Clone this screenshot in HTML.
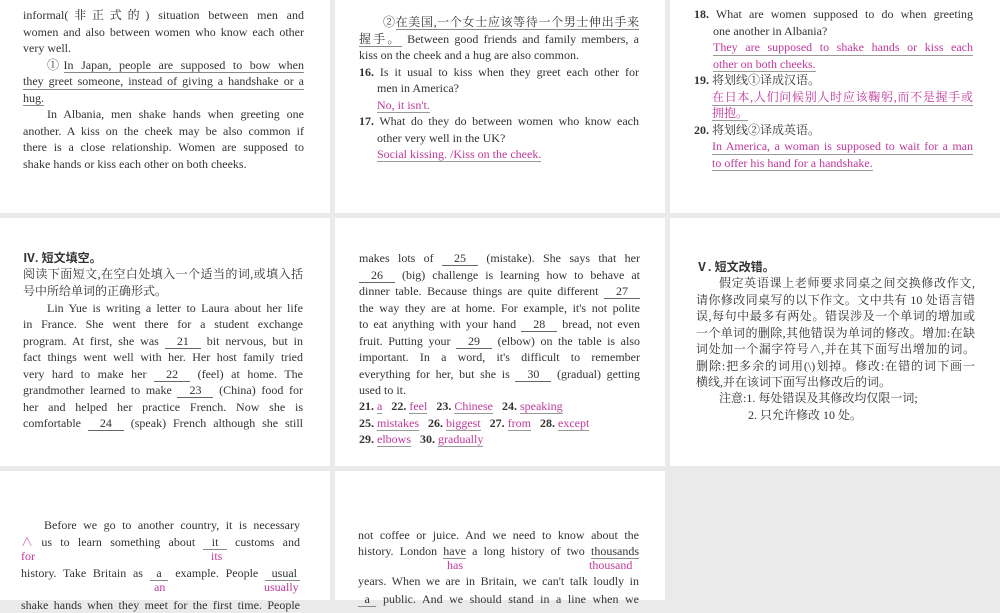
<!DOCTYPE html>
<html><head><meta charset="utf-8"><style>
html,body{margin:0;padding:0;}
body{width:1000px;height:600px;background:#eaeaea;position:relative;overflow:hidden;font-family:"Liberation Serif","Noto Serif CJK SC",serif;font-size:12px;color:#333;}
.c{position:absolute;background:#fff;}
.l{position:absolute;white-space:nowrap;line-height:16px;height:16px;}
.j{text-align:justify;text-align-last:justify;}
.p{color:#c0389c;}
.u{border-bottom:1px solid #888;}
.pu{color:#c0389c;border-bottom:1px solid #999;}
.bl{display:inline-block;width:36px;border-bottom:1px solid #666;text-align:center;text-align-last:center;line-height:13px;}
.h{font-family:"Liberation Sans","Noto Sans CJK SC",sans-serif;font-weight:bold;}
</style></head><body>
<div class="c" style="left:0;top:0;width:330px;height:213px"></div>
<div class="c" style="left:335px;top:0;width:330px;height:213px"></div>
<div class="c" style="left:670px;top:0;width:330px;height:213px"></div>
<div class="c" style="left:0;top:218px;width:330px;height:248px"></div>
<div class="c" style="left:335px;top:218px;width:330px;height:248px"></div>
<div class="c" style="left:670px;top:218px;width:330px;height:248px"></div>
<div class="c" style="left:0;top:471px;width:330px;height:129px"></div>
<div class="c" style="left:335px;top:471px;width:330px;height:129px"></div>

<!-- cell 1 -->
<div class="l j" style="left:23px;top:7px;width:281px">informal(非正式的) situation between men and</div>
<div class="l j" style="left:23px;top:24px;width:281px">women and also between women who know each other</div>
<div class="l" style="left:23px;top:40px">very well.</div>
<div class="l j" style="left:47px;top:57px;width:257px">①<span class="u">In Japan, people are supposed to bow when</span></div>
<div class="l j u" style="left:23px;top:73px;width:281px">they greet someone, instead of giving a handshake or a</div>
<div class="l" style="left:23px;top:90px"><span class="u">hug.</span></div>
<div class="l j" style="left:47px;top:106px;width:257px">In Albania, men shake hands when greeting one</div>
<div class="l j" style="left:23px;top:123px;width:281px">another. A kiss on the cheek may be also common if</div>
<div class="l j" style="left:23px;top:139px;width:281px">there is a close relationship. Women are supposed to</div>
<div class="l" style="left:23px;top:156px">shake hands or kiss each other on both cheeks.</div>

<!-- cell 2 -->
<div class="l j" style="left:383px;top:14px;width:256px">②<span class="u">在美国,一个女士应该等待一个男士伸出手来</span></div>
<div class="l j" style="left:359px;top:31px;width:280px"><span class="u">握手。</span> Between good friends and family members, a</div>
<div class="l" style="left:359px;top:47px">kiss on the cheek and a hug are also common.</div>
<div class="l j" style="left:359px;top:64px;width:280px"><b>16.</b> Is it usual to kiss when they greet each other for</div>
<div class="l" style="left:377px;top:80px">men in America?</div>
<div class="l" style="left:377px;top:97px"><span class="pu">No, it isn't.</span></div>
<div class="l j" style="left:359px;top:113px;width:280px"><b>17.</b> What do they do between women who know each</div>
<div class="l" style="left:377px;top:130px">other very well in the UK?</div>
<div class="l" style="left:377px;top:146px"><span class="pu">Social kissing. /Kiss on the cheek.</span></div>

<!-- cell 3 -->
<div class="l j" style="left:694px;top:6px;width:279px"><b>18.</b> What are women supposed to do when greeting</div>
<div class="l" style="left:713px;top:23px">one another in Albania?</div>
<div class="l j pu" style="left:713px;top:39px;width:260px">They are supposed to shake hands or kiss each</div>
<div class="l" style="left:713px;top:56px"><span class="pu">other on both cheeks.</span></div>
<div class="l" style="left:694px;top:72px"><b>19.</b> 将划线①译成汉语。</div>
<div class="l j pu" style="left:712px;top:89px;width:261px">在日本,人们问候别人时应该鞠躬,而不是握手或</div>
<div class="l" style="left:712px;top:105px"><span class="pu">拥抱。</span></div>
<div class="l" style="left:694px;top:122px"><b>20.</b> 将划线②译成英语。</div>
<div class="l j pu" style="left:712px;top:138px;width:261px">In America, a woman is supposed to wait for a man</div>
<div class="l" style="left:712px;top:155px"><span class="pu">to offer his hand for a handshake.</span></div>

<!-- cell 4 -->
<div class="l h" style="left:23px;top:250px">Ⅳ. 短文填空。</div>
<div class="l j" style="left:23px;top:266px;width:280px">阅读下面短文,在空白处填入一个适当的词,或填入括</div>
<div class="l" style="left:23px;top:283px">号中所给单词的正确形式。</div>
<div class="l j" style="left:47px;top:300px;width:256px">Lin Yue is writing a letter to Laura about her life</div>
<div class="l j" style="left:23px;top:316px;width:280px">in France. She went there for a student exchange</div>
<div class="l j" style="left:23px;top:333px;width:280px">program. At first, she was <span class="bl">21</span> bit nervous, but in</div>
<div class="l j" style="left:23px;top:349px;width:280px">fact things went well with her. Her host family tried</div>
<div class="l j" style="left:23px;top:366px;width:280px">very hard to make her <span class="bl">22</span> (feel) at home. The</div>
<div class="l j" style="left:23px;top:382px;width:280px">grandmother learned to make <span class="bl">23</span> (China) food for</div>
<div class="l j" style="left:23px;top:399px;width:280px">her and helped her practice French. Now she is</div>
<div class="l j" style="left:23px;top:415px;width:280px">comfortable <span class="bl">24</span> (speak) French although she still</div>

<!-- cell 5 -->
<div class="l j" style="left:359px;top:250px;width:281px">makes lots of <span class="bl">25</span> (mistake). She says that her</div>
<div class="l j" style="left:359px;top:267px;width:281px"><span class="bl">26</span> (big) challenge is learning how to behave at</div>
<div class="l j" style="left:359px;top:283px;width:281px">dinner table. Because things are quite different <span class="bl">27</span></div>
<div class="l j" style="left:359px;top:300px;width:281px">the way they are at home. For example, it's not polite</div>
<div class="l j" style="left:359px;top:316px;width:281px">to eat anything with your hand <span class="bl">28</span> bread, not even</div>
<div class="l j" style="left:359px;top:333px;width:281px">fruit. Putting your <span class="bl">29</span> (elbow) on the table is also</div>
<div class="l j" style="left:359px;top:349px;width:281px">important. In a word, it's difficult to remember</div>
<div class="l j" style="left:359px;top:366px;width:281px">everything for her, but she is <span class="bl">30</span> (gradual) getting</div>
<div class="l" style="left:359px;top:382px">used to it.</div>
<div class="l" style="left:359px;top:398px"><b>21.</b> <span class="pu">a</span>&nbsp;&nbsp;&nbsp;<b>22.</b> <span class="pu">feel</span>&nbsp;&nbsp;&nbsp;<b>23.</b> <span class="pu">Chinese</span>&nbsp;&nbsp;&nbsp;<b>24.</b> <span class="pu">speaking</span></div>
<div class="l" style="left:359px;top:415px"><b>25.</b> <span class="pu">mistakes</span>&nbsp;&nbsp;&nbsp;<b>26.</b> <span class="pu">biggest</span>&nbsp;&nbsp;&nbsp;<b>27.</b> <span class="pu">from</span>&nbsp;&nbsp;&nbsp;<b>28.</b> <span class="pu">except</span></div>
<div class="l" style="left:359px;top:431px"><b>29.</b> <span class="pu">elbows</span>&nbsp;&nbsp;&nbsp;<b>30.</b> <span class="pu">gradually</span></div>

<!-- cell 6 -->
<div class="l h" style="left:696px;top:259px">Ⅴ. 短文改错。</div>
<div class="l j" style="left:719px;top:275px;width:256px">假定英语课上老师要求同桌之间交换修改作文,</div>
<div class="l j" style="left:696px;top:292px;width:279px">请你修改同桌写的以下作文。文中共有 10 处语言错</div>
<div class="l j" style="left:696px;top:308px;width:279px">误,每句中最多有两处。错误涉及一个单词的增加或</div>
<div class="l j" style="left:696px;top:325px;width:279px">一个单词的删除,其他错误为单词的修改。增加:在缺</div>
<div class="l j" style="left:696px;top:341px;width:279px">词处加一个漏字符号∧,并在其下面写出增加的词。</div>
<div class="l j" style="left:696px;top:358px;width:279px">删除:把多余的词用(\)划掉。修改:在错的词下画一</div>
<div class="l" style="left:696px;top:374px">横线,并在该词下面写出修改后的词。</div>
<div class="l" style="left:719px;top:390px">注意:1. 每处错误及其修改均仅限一词;</div>
<div class="l" style="left:748px;top:407px">2. 只允许修改 10 处。</div>

<!-- cell 7 -->
<div class="l j" style="left:44px;top:517px;width:256px">Before we go to another country, it is necessary</div>
<div class="l j" style="left:21px;top:534px;width:279px"><span class="p">∧</span> us to learn something about <span class="u">&nbsp;it&nbsp;</span> customs and</div>
<div class="l p" style="left:21px;top:548px">for</div>
<div class="l p" style="left:211px;top:548px">its</div>
<div class="l j" style="left:21px;top:565px;width:279px">history. Take Britain as <span class="u">&nbsp;a&nbsp;</span> example. People <span class="u">&nbsp;usual&nbsp;</span></div>
<div class="l p" style="left:154px;top:579px">an</div>
<div class="l p" style="left:264px;top:579px">usually</div>
<div class="l j" style="left:21px;top:597px;width:279px">shake hands when they meet for the first time. People</div>

<!-- cell 8 -->
<div class="l j" style="left:358px;top:527px;width:281px">not coffee or juice. And we need to know about the</div>
<div class="l j" style="left:358px;top:543px;width:281px">history. London <span class="u">have</span> a long history of two <span class="u">thousands</span></div>
<div class="l p" style="left:447px;top:557px">has</div>
<div class="l p" style="left:589px;top:557px">thousand</div>
<div class="l j" style="left:358px;top:573px;width:281px">years. When we are in Britain, we can't talk loudly in</div>
<div class="l j" style="left:358px;top:591px;width:281px"><span class="u">&nbsp;a&nbsp;</span> public. And we should stand in a line when we</div>
</body></html>
